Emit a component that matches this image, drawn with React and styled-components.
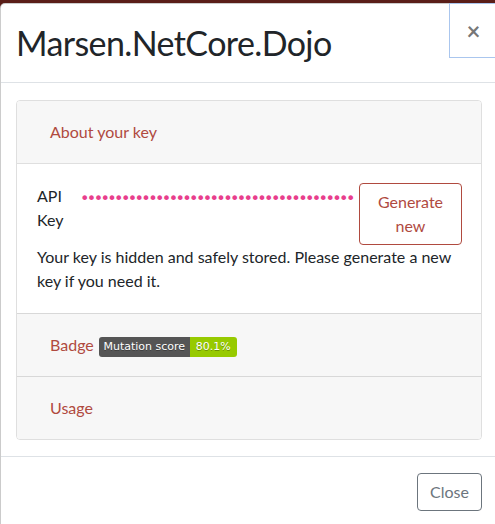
import React from 'react'
import styled, { createGlobalStyle } from 'styled-components'

const GlobalStyle = createGlobalStyle`
  html, body {
    margin: 0;
    overflow: hidden;
    background: #5a1e18;
  }
  body {
    font-family: Lato, "Noto Sans", sans-serif;
    color: #212529;
  }
`

const Backdrop = styled.div`
  padding-top: 3px;
  height: 521px;
`

const Dialog = styled.div`
  width: 498px;
  height: 560px;
  background: #fff;
  border: 1px solid rgba(0, 0, 0, 0.2);
  border-right: none;
  border-radius: 5px 0 0 0;
  box-sizing: border-box;
`

const Header = styled.div`
  display: flex;
  align-items: flex-start;
  padding: 16px 16px 16px 15px;
  border-bottom: 1px solid #dee2e6;
`

const Title = styled.h4`
  margin: 0;
  font-size: 34px;
  font-weight: 400;
  line-height: 46px;
  letter-spacing: -0.6px;
  color: #212529;
`

const CloseButton = styled.button`
  margin: -17px -16px -16px auto;
  width: 49px;
  height: 55px;
  padding: 0;
  background: transparent;
  border: 1px solid #aac6ee;
  font-family: Lato, sans-serif;
  font-size: 24px;
  font-weight: 700;
  line-height: 1;
  color: rgba(0, 0, 0, 0.55);
  cursor: pointer;
`

const Body = styled.div`
  padding: 17px 16px 16px 15px;
`

const Card = styled.div`
  border: 1px solid rgba(0, 0, 0, 0.125);
  border-radius: 4px;
  overflow: hidden;
`

const CardHeader = styled.div`
  display: flex;
  align-items: center;
  padding: 12px 20px;
  background: #f7f7f7;
  border-top: ${(p) => (p.$first ? 'none' : '1px solid rgba(0, 0, 0, 0.125)')};
`

const LinkButton = styled.button`
  padding: 6px 12px;
  border: 1px solid transparent;
  background: transparent;
  font-family: Lato, sans-serif;
  font-size: 16px;
  line-height: 24px;
  color: #b04a3f;
  cursor: pointer;
  display: flex;
  align-items: center;
  gap: 5px;
`

const CardBody = styled.div`
  padding: 20px;
  border-top: 1px solid rgba(0, 0, 0, 0.125);
  background: #fff;
  font-size: 16px;
  line-height: 24px;
`

const KeyRow = styled.div`
  display: flex;
  align-items: flex-start;
`

const KeyLabel = styled.div`
  width: 46px;
  flex-shrink: 0;
`

const KeyDots = styled.div`
  flex: 1;
  white-space: nowrap;
  font-family: "DejaVu Sans", sans-serif;
  font-size: 16px;
  letter-spacing: -2.62px;
  line-height: 24px;
  padding-top: 3px;
  margin: 0 3px 0 -3px;
  color: #e83e8c;
`

const GenerateButton = styled.button`
  width: 103px;
  flex-shrink: 0;
  margin: -1px -1px 0 0;
  padding: 6px 12px;
  background: transparent;
  border: 1px solid #b04a3f;
  border-radius: 4px;
  font-family: Lato, sans-serif;
  font-size: 16px;
  line-height: 24px;
  color: #b04a3f;
  cursor: pointer;
`

const Hint = styled.p`
  margin: 0;
`

const Badge = styled.span`
  display: inline-flex;
  height: 20px;
  border-radius: 3px;
  overflow: hidden;
  font-family: "DejaVu Sans", Verdana, sans-serif;
  font-size: 11px;
  line-height: 20px;
  color: #fff;
  text-shadow: 0 1px 0 rgba(1, 1, 1, 0.3);
  margin-top: 4px;
`

const BadgePart = styled.span`
  width: ${(p) => p.$width}px;
  text-align: center;
  background: ${(p) => p.$color};
`

const Footer = styled.div`
  display: flex;
  justify-content: flex-end;
  padding: 16px;
  border-top: 1px solid #dee2e6;
`

const SecondaryButton = styled.button`
  padding: 6px 12px;
  background: transparent;
  border: 1px solid #6c757d;
  border-radius: 4px;
  font-family: Lato, sans-serif;
  font-size: 16px;
  line-height: 24px;
  color: #6c757d;
  cursor: pointer;
`

export default function App() {
  return (
    <>
      <GlobalStyle />
      <Backdrop>
        <Dialog>
          <Header>
            <Title>Marsen.NetCore.Dojo</Title>
            <CloseButton aria-label="Close">×</CloseButton>
          </Header>
          <Body>
            <Card>
              <CardHeader $first>
                <LinkButton>About your key</LinkButton>
              </CardHeader>
              <CardBody>
                <KeyRow>
                  <KeyLabel>API Key</KeyLabel>
                  <KeyDots>{'•'.repeat(40)}</KeyDots>
                  <GenerateButton>Generate new</GenerateButton>
                </KeyRow>
                <Hint>Your key is hidden and safely stored. Please generate a new key if you need it.</Hint>
              </CardBody>
              <CardHeader>
                <LinkButton>
                  Badge
                  <Badge>
                    <BadgePart $width={91} $color="#555">Mutation score</BadgePart>
                    <BadgePart $width={47} $color="#97ca00">80.1%</BadgePart>
                  </Badge>
                </LinkButton>
              </CardHeader>
              <CardHeader>
                <LinkButton>Usage</LinkButton>
              </CardHeader>
            </Card>
          </Body>
          <Footer>
            <SecondaryButton>Close</SecondaryButton>
          </Footer>
        </Dialog>
      </Backdrop>
    </>
  )
}
